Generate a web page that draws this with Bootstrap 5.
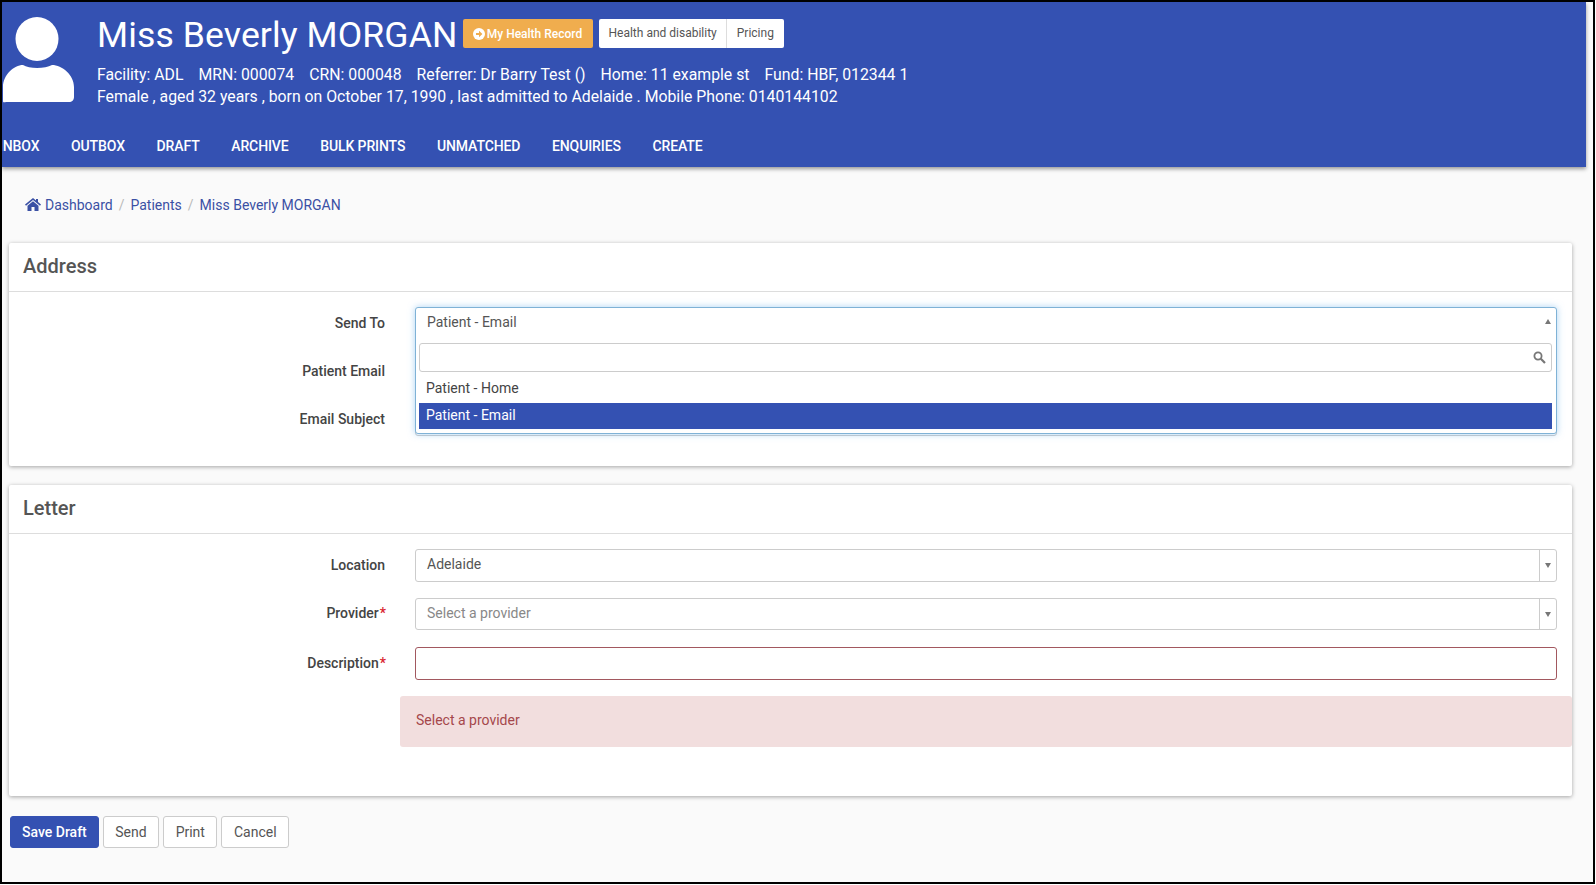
<!DOCTYPE html>
<html lang="en">
<head>
  <meta charset="UTF-8">
  <title>Miss Beverly MORGAN</title>
  <link href="https://cdn.jsdelivr.net/npm/bootstrap@5.3.3/dist/css/bootstrap.min.css" rel="stylesheet">
  <style>
    html, body { background: #fff; }
    body { font-family: Roboto, "Liberation Sans", sans-serif; font-size: 14px; color: #555; }
    .page-frame { width: 1595px; height: 884px; border: 2px solid #000; background: #fafafa; overflow: hidden; }

    .top-head { background: #3451b2; color: #fff; margin-right: 7px; height: 165px; box-shadow: 0 2px 4px rgba(0,0,0,.4); overflow: hidden; }
    .head-top { height: 125px; }
    .avatar-box { width: 95px; padding-top: 15px; flex-shrink: 0; }
    .avatar-box svg { display: block; }
    .head-title { padding-top: 11px; height: 60px; }
    .patient-name { font-size: 35.6px; line-height: 44px; font-weight: 400; margin: 0 5px 0 0; letter-spacing: .1px; }
    .btn-mhr { background: #f0ad4e; color: #fff; font-size: 12px; font-weight: 500; height: 29px; width: 130px; padding: 0; border: 0; border-radius: 2px; margin-top: 6px; display: flex; align-items: center; justify-content: center; gap: 2px; }
    .btn-mhr:hover { background: #f0ad4e; color: #fff; }
    .head-group { margin-top: 6px; margin-left: 6px; height: 29px; }
    .head-group .btn { background: #fff; color: #555; font-size: 12px; border: 0; border-radius: 2px; padding: 0 10px; line-height: 29px; height: 29px; }
    .head-group .btn + .btn { border-left: 1px solid #ddd; margin-left: 0; }
    .info-lines { font-size: 15.8px; line-height: 22px; margin-top: 2px; white-space: pre; }
    .info-lines span { margin-right: 15px; }
    .head-nav { margin-left: -19px; height: 40px; margin-top: -1px; }
    .head-nav a { color: #fff; font-size: 14px; font-weight: 500; text-transform: uppercase; padding: 0 15.8px; line-height: 40px; letter-spacing: -.1px; }
    .head-nav a:hover { color: #fff; }

    .crumb-bar { padding: 28px 0 0 23px; height: 76px; }
    .crumb-bar .breadcrumb { font-size: 14px; margin: 0; }
    .crumb-bar a, .crumb-bar .active { color: #3a50a4; text-decoration: none; }
    .crumb-bar svg { vertical-align: -1px; margin-right: 4px; }
    .crumb-bar .breadcrumb-item + .breadcrumb-item { padding-left: 6px; }
    .crumb-bar .breadcrumb-item + .breadcrumb-item::before { padding-right: 6px; color: #bbb; }

    .page-body { padding-left: 7px; width: 1570px; }
    .panel-card { border: 0; border-radius: 2px; box-shadow: 0 1px 4px rgba(0,0,0,.35); background: #fff; }
    .panel-card .card-header { background: #fff; height: 49px; padding: 0 14px; border-bottom: 1px solid #ddd; font-size: 20px; font-weight: 500; line-height: 47px; color: #555; }
    .address-card { height: 223px; margin-bottom: 19px; }
    .letter-card { height: 311px; margin-bottom: 20px; }
    .panel-body { padding: 15px 15px 0 0; }
    .fld-row { display: flex; margin-bottom: 15px; position: relative; }
    .fld-row.tall { margin-bottom: 16px; }
    .fld-row.slim { margin-bottom: 17px; }
    .fld-label { width: 376px; margin-right: 30px; text-align: right; font-weight: 500; line-height: 33px; color: #444; flex-shrink: 0; }
    .fld-label.marked { line-height: 31px; }
    .fld-label .req { color: #d9232d; margin-left: 1px; margin-right: -1px; }
    .fld-main { flex-grow: 1; position: relative; }
    .sel-box { height: 33px; border: 1px solid #ccc; border-radius: 3px; display: flex; background: #fff; overflow: hidden; }
    .sel-box.short { height: 32px; }
    .sel-text { flex-grow: 1; padding-left: 11px; line-height: 29px; color: #555; }
    .sel-text.placeholder-text { color: #888; }
    .sel-arrow { width: 17px; border-left: 1px solid #ccc; display: flex; align-items: center; justify-content: center; }
    .tri-down { border: 3.5px solid transparent; border-top: 5px solid #777; border-bottom: 0; }
    .tri-up { border: 3.5px solid transparent; border-bottom: 5px solid #777; border-top: 0; }
    .text-field { height: 33px; border: 1px solid #ccc; border-radius: 3px; background: #fff; }
    .text-field.has-error { border-color: #a2585f; }

    .send-menu { position: absolute; top: 0; left: 0; right: 0; height: 127px; background: #fff; border: 1px solid #7fb2d6; border-radius: 3px; box-shadow: 0 0 7px rgba(102,175,233,.55); padding: 0 4px 0 3px; z-index: 5; }
    .send-current { height: 35px; display: flex; align-items: center; justify-content: space-between; padding: 0 1px 0 8px; color: #555; line-height: 29px; }
    .send-current span { margin-top: -7px; }
    .send-current i { margin-top: -8px; }
    .send-search { height: 29px; border: 1px solid #ccc; border-radius: 3px; display: flex; align-items: center; justify-content: flex-end; padding-right: 5px; }
    .send-option { height: 26px; line-height: 24px; padding-left: 7px; color: #444; }
    .send-option.first { margin-top: 3px; height: 28px; line-height: 26px; }
    .send-option.picked { background: #3451b2; color: #fff; }

    .error-note { margin: 1px -15px 0 391px; height: 51px; background: #f2dede; color: #a5474b; border: 0; border-radius: 3px; padding: 0 16px; line-height: 48px; font-size: 14px; }

    .form-actions { gap: 4px; padding-left: 1px; }
    .form-actions .btn { height: 32px; font-size: 14px; padding: 0 11.5px; border-radius: 3px; line-height: 30px; }
    .form-actions .btn-save { background: #3451b2; border: 1px solid #3451b2; color: #fff; font-weight: 500; padding: 0 11px; }
    .form-actions .btn-save:hover { background: #3451b2; color: #fff; }
    .btn-plain { background: #fff; border: 1px solid #ccc; color: #555; }
  </style>
</head>
<body class="m-0">
  <div class="page-frame">
    <header class="top-head">
      <div class="head-top d-flex">
        <div class="avatar-box">
          <svg width="72" height="86" viewBox="0 0 72 86">
            <ellipse cx="35" cy="22" rx="21.5" ry="22" fill="#fff"/>
            <path d="M1 84V70C1 58 12 48 21 48C27 52 43 52 50 48C60 48 72 58 72 70V80C72 83 70 85 67 85H5C2 85 1 86 1 84Z" fill="#fff"/>
          </svg>
        </div>
        <div>
          <div class="head-title d-flex">
            <h1 class="patient-name">Miss Beverly MORGAN</h1>
            <a class="btn btn-mhr" href="#">
              <svg width="12" height="12" viewBox="0 0 12 12"><circle cx="6" cy="6" r="6" fill="#fff"/><path d="M3 5h3V2.8L9.4 6 6 9.2V7H3z" fill="#f0ad4e"/></svg>
              My Health Record
            </a>
            <div class="btn-group head-group">
              <a class="btn" href="#">Health and disability</a>
              <a class="btn" href="#">Pricing</a>
            </div>
          </div>
          <div class="info-lines"><div><span>Facility: ADL</span><span>MRN: 000074</span><span>CRN: 000048</span><span>Referrer: Dr Barry Test ()</span><span>Home: 11 example st</span><span>Fund: HBF, 012344 1</span></div><div>Female , aged 32 years , born on October 17, 1990 , last admitted to Adelaide . Mobile Phone: 0140144102</div></div>
        </div>
      </div>
      <nav class="nav head-nav">
        <a class="nav-link" href="#">Inbox</a>
        <a class="nav-link" href="#">Outbox</a>
        <a class="nav-link" href="#">Draft</a>
        <a class="nav-link" href="#">Archive</a>
        <a class="nav-link" href="#">Bulk prints</a>
        <a class="nav-link" href="#">Unmatched</a>
        <a class="nav-link" href="#">Enquiries</a>
        <a class="nav-link" href="#">Create</a>
      </nav>
    </header>

    <div class="crumb-bar">
      <ol class="breadcrumb">
        <li class="breadcrumb-item"><a href="#"><svg width="16" height="13" viewBox="0 0 16 13"><path d="M8 0L0 6.6l1 1.2L8 2l7 5.8 1-1.2-3-2.5V1h-2v1.500z" fill="#3a50a4"/><path d="M8 3.200L2.500 7.700V13h4V9h3v4h4V7.700z" fill="#3a50a4"/></svg>Dashboard</a></li>
        <li class="breadcrumb-item"><a href="#">Patients</a></li>
        <li class="breadcrumb-item active">Miss Beverly MORGAN</li>
      </ol>
    </div>

    <div class="page-body">
      <div class="card panel-card address-card">
        <div class="card-header">Address</div>
        <div class="panel-body">
          <div class="fld-row">
            <label class="fld-label">Send To</label>
            <div class="fld-main">
              <div class="send-menu">
                <div class="send-current"><span>Patient - Email</span><i class="tri-up"></i></div>
                <div class="send-search">
                  <svg width="13" height="13" viewBox="0 0 13 13"><circle cx="5" cy="5" r="3.600" fill="none" stroke="#777" stroke-width="1.800"/><path d="M7.800 7.800L12 12" stroke="#777" stroke-width="2.200"/></svg>
                </div>
                <div class="send-option first">Patient - Home</div>
                <div class="send-option picked">Patient - Email</div>
              </div>
            </div>
          </div>
          <div class="fld-row"><label class="fld-label">Patient Email</label><div class="fld-main"><div class="text-field"></div></div></div>
          <div class="fld-row"><label class="fld-label">Email Subject</label><div class="fld-main"><div class="text-field"></div></div></div>
        </div>
      </div>

      <div class="card panel-card letter-card">
        <div class="card-header">Letter</div>
        <div class="panel-body">
          <div class="fld-row tall">
            <label class="fld-label">Location</label>
            <div class="fld-main"><div class="sel-box"><div class="sel-text">Adelaide</div><div class="sel-arrow"><i class="tri-down"></i></div></div></div>
          </div>
          <div class="fld-row slim">
            <label class="fld-label marked">Provider<span class="req">*</span></label>
            <div class="fld-main"><div class="sel-box short"><div class="sel-text placeholder-text">Select a provider</div><div class="sel-arrow"><i class="tri-down"></i></div></div></div>
          </div>
          <div class="fld-row tall">
            <label class="fld-label">Description<span class="req">*</span></label>
            <div class="fld-main"><div class="text-field has-error"></div></div>
          </div>
          <div class="error-note" role="alert">Select a provider</div>
        </div>
      </div>

      <div class="d-flex form-actions">
        <a class="btn btn-save" href="#">Save Draft</a>
        <a class="btn btn-plain" href="#">Send</a>
        <a class="btn btn-plain" href="#">Print</a>
        <a class="btn btn-plain" href="#">Cancel</a>
      </div>
    </div>
  </div>
  <script src="https://cdn.jsdelivr.net/npm/bootstrap@5.3.3/dist/js/bootstrap.bundle.min.js"></script>
</body>
</html>
